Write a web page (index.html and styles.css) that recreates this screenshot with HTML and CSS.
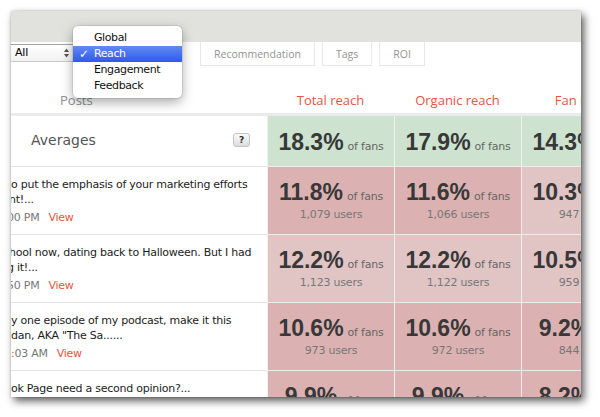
FILE: index.html
```html
<!DOCTYPE html>
<html>
<head>
<meta charset="utf-8">
<link rel="stylesheet" href="styles.css">
</head>
<body>
<div class="window">
  <div class="titlebar"></div>
  <div class="toolbar">
    <div class="select">
      <span>All</span>
      <svg class="arrows" width="5" height="10" viewBox="0 0 5 10"><path d="M0 4 L2.5 0.5 L5 4 Z M0 6 L2.5 9.5 L5 6 Z" fill="#555"/></svg>
    </div>
    <div class="tabs">
      <div class="tab">Recommendation</div>
      <div class="tab">Tags</div>
      <div class="tab">ROI</div>
    </div>
  </div>
  <div class="grid">
    <div class="th posts">Posts</div>
    <div class="th metric">Total reach</div>
    <div class="th metric">Organic reach</div>
    <div class="th metric">Fan reach</div>

    <div class="post avg"><span class="avg-label">Averages</span><span class="help">?</span></div>
    <div class="cell g short"><div class="line"><span class="num">18.3%</span> <span class="of">of fans</span></div></div>
    <div class="cell g short"><div class="line"><span class="num">17.9%</span> <span class="of">of fans</span></div></div>
    <div class="cell g short"><div class="line"><span class="num">14.3%</span> <span class="of">of fans</span></div></div>

    <div class="post">
      <div class="txt">o put the emphasis of your marketing efforts</div>
      <div class="txt clip2">nt!...</div>
      <div class="meta clip4"><span class="time">00 PM</span><span class="view">View</span></div>
    </div>
    <div class="cell d"><div class="line"><span class="num">11.8%</span> <span class="of">of fans</span></div><div class="users">1,079 users</div></div>
    <div class="cell d"><div class="line"><span class="num">11.6%</span> <span class="of">of fans</span></div><div class="users">1,066 users</div></div>
    <div class="cell l"><div class="line"><span class="num">10.3%</span> <span class="of">of fans</span></div><div class="users">947 users</div></div>

    <div class="post">
      <div class="txt clip2">hool now, dating back to Halloween. But I had</div>
      <div class="txt clip4">g it!...</div>
      <div class="meta clip4"><span class="time">50 PM</span><span class="view">View</span></div>
    </div>
    <div class="cell l"><div class="line"><span class="num">12.2%</span> <span class="of">of fans</span></div><div class="users">1,123 users</div></div>
    <div class="cell l"><div class="line"><span class="num">12.2%</span> <span class="of">of fans</span></div><div class="users">1,122 users</div></div>
    <div class="cell l"><div class="line"><span class="num">10.5%</span> <span class="of">of fans</span></div><div class="users">959 users</div></div>

    <div class="post">
      <div class="txt">y one episode of my podcast, make it this</div>
      <div class="txt">dan, AKA "The Sa......</div>
      <div class="meta"><span class="time">:03 AM</span><span class="view">View</span></div>
    </div>
    <div class="cell d"><div class="line"><span class="num">10.6%</span> <span class="of">of fans</span></div><div class="users">973 users</div></div>
    <div class="cell d"><div class="line"><span class="num">10.6%</span> <span class="of">of fans</span></div><div class="users">972 users</div></div>
    <div class="cell d"><div class="line"><span class="num">9.2%</span> <span class="of">of fans</span></div><div class="users">844 users</div></div>

    <div class="post">
      <div class="txt">ok Page need a second opinion?...</div>
      <div class="txt">&nbsp;</div>
      <div class="meta">&nbsp;</div>
    </div>
    <div class="cell d"><div class="line"><span class="num">9.9%</span> <span class="of">of fans</span></div><div class="users">910 users</div></div>
    <div class="cell d"><div class="line"><span class="num">9.9%</span> <span class="of">of fans</span></div><div class="users">909 users</div></div>
    <div class="cell d"><div class="line"><span class="num">8.2%</span> <span class="of">of fans</span></div><div class="users">752 users</div></div>
  </div>

  <ul class="menu">
    <li class="item"><span class="check"></span>Global</li>
    <li class="item active"><span class="check">✓</span>Reach</li>
    <li class="item"><span class="check"></span>Engagement</li>
    <li class="item"><span class="check"></span>Feedback</li>
  </ul>
</div>
</body>
</html>
```
FILE: styles.css
```css
html, body {
  margin: 0;
  padding: 0;
  background: #fff;
}
body {
  width: 600px;
  height: 417px;
  overflow: hidden;
}
.window {
  position: relative;
  margin: 11px 0 0 11px;
  width: 570px;
  height: 386px;
  overflow: hidden;
  background: #fff;
  box-shadow: 3px 4px 8px rgba(0,0,0,0.65), 0 0 2px rgba(0,0,0,0.2);
}
.titlebar {
  height: 31px;
  background: #e1e1dd;
}
.toolbar {
  display: flex;
  height: 24px;
}
.select {
  display: flex;
  align-items: center;
  justify-content: space-between;
  box-sizing: border-box;
  width: 64px;
  height: 18px;
  margin: 2px 125px 0 0;
  padding: 0 6px 0 4px;
  border-top: 1px solid #a3a3a3;
  border-bottom: 1px solid #c9c9c9;
  background: linear-gradient(#ffffff, #f1f1f1);
  font: 11px/16px "DejaVu Sans", sans-serif;
  letter-spacing: -0.2px;
  color: #000;
}
.arrows {
  display: block;
}
.tabs {
  display: flex;
  gap: 7px;
}
.tab {
  height: 21px;
  padding: 2px 13px 0;
  border: 1px solid #e8e8e8;
  border-top: none;
  font: 10.5px/21px "Open Sans", sans-serif;
  color: #939393;
  white-space: nowrap;
}
.grid {
  display: grid;
  grid-template-columns: 256px 127px 127px 127px;
  width: 637px;
}
.th {
  height: 42px;
  padding-bottom: 5px;
  border-bottom: 3px solid #ebebeb;
  display: flex;
  align-items: flex-end;
  font: 13px/16px "Open Sans", sans-serif;
}
.posts {
  color: #8f8f8f;
  padding-left: 49px;
}
.metric {
  color: #e9553f;
  justify-content: center;
  white-space: nowrap;
}
.post {
  height: 57px;
  padding: 10px 0 0 0;
  border-bottom: 1px solid #e4e4e4;
  font: 11px/15px "DejaVu Sans", sans-serif;
  letter-spacing: -0.25px;
  color: #1c1c1c;
}
.txt {
  white-space: nowrap;
}
.clip2 {
  margin-left: -2px;
}
.clip4 {
  margin-left: -4px;
}
.meta {
  margin-top: 3px;
  white-space: nowrap;
  color: #777;
}
.view {
  color: #e8553e;
  margin-left: 9px;
}
.post.avg {
  height: 47px;
  padding: 0 17px 3px 20px;
  display: flex;
  align-items: center;
  justify-content: space-between;
}
.avg-label {
  font: 14px/18px "DejaVu Sans", sans-serif;
  letter-spacing: 0;
  color: #555;
}
.help {
  box-sizing: border-box;
  width: 17px;
  height: 14px;
  border: 1px solid #c4c4c4;
  border-radius: 3px;
  background: linear-gradient(#fbfbfb, #dcdcdc);
  font: bold 9px/12px "DejaVu Sans", sans-serif;
  letter-spacing: 0;
  text-align: center;
  color: #333;
}
.cell {
  height: 66px;
  padding-top: 1px;
  border-left: 1px solid #f4f0f0;
  border-bottom: 1px solid #f1ecec;
  display: flex;
  flex-direction: column;
  align-items: center;
  justify-content: center;
}
.cell.short {
  height: 49px;
}
.g { background: #cde3cf; }
.d { background: #dbb2b1; }
.l { background: #e1c5c5; }
.line {
  white-space: nowrap;
  line-height: 24px;
  height: 24px;
}
.num {
  font: bold 23px/24px "Liberation Sans", Arial, sans-serif;
  color: #383838;
}
.of {
  font: 11px/24px "DejaVu Sans", sans-serif;
  letter-spacing: -0.2px;
  color: #666;
}
.users {
  margin-top: 4px;
  font: 11px/14px "DejaVu Sans", sans-serif;
  letter-spacing: -0.2px;
  color: #777;
  white-space: nowrap;
}
.menu {
  position: absolute;
  left: 62px;
  top: 15px;
  width: 109px;
  margin: 0;
  padding: 4px 0;
  list-style: none;
  background: #fff;
  border-radius: 5px;
  box-shadow: 0 4px 12px rgba(0,0,0,0.35), 0 0 0 1px rgba(0,0,0,0.08);
}
.item {
  display: flex;
  height: 16px;
  font: 11px/16px "DejaVu Sans", sans-serif;
  letter-spacing: -0.4px;
  color: #111;
}
.check {
  width: 15px;
  padding-left: 6px;
  font-size: 12px;
  font-weight: bold;
}
.item.active {
  background: linear-gradient(#6389f5, #2c5be8);
  color: #fff;
}
```
